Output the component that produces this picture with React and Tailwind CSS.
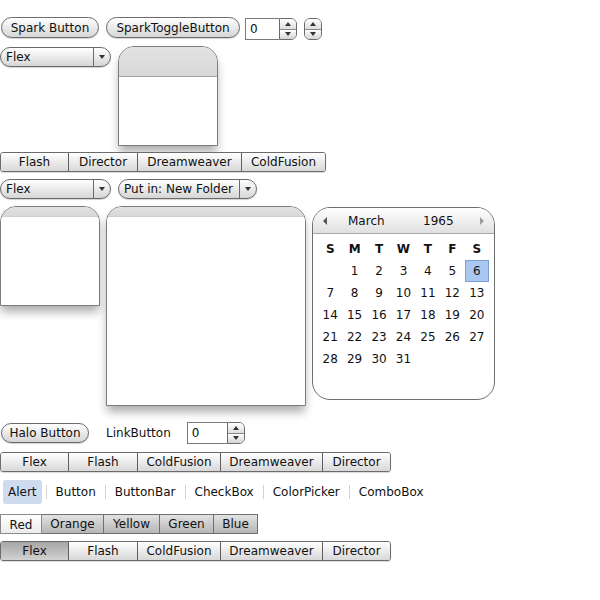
import React from "react";

const pill =
  "rounded-full border border-[#6b6b6b] bg-linear-to-b from-white to-[#d6d6d6] shadow-[0_1px_1px_rgba(0,0,0,0.18)]";

function TriDown() {
  return <div className="w-0 h-0 border-l-[3.5px] border-r-[3.5px] border-t-[4px] border-l-transparent border-r-transparent border-t-[#333]" />;
}
function TriUp() {
  return <div className="w-0 h-0 border-l-[3.5px] border-r-[3.5px] border-b-[4px] border-l-transparent border-r-transparent border-b-[#333]" />;
}

function Spin({ className }) {
  return (
    <div className={`flex flex-col w-[18px] h-[22px] border border-[#6b6b6b] overflow-hidden ${className}`}>
      <div className="flex-1 flex items-center justify-center bg-linear-to-b from-white to-[#dedede]">
        <TriUp />
      </div>
      <div className="flex-1 flex items-center justify-center border-t border-[#8a8a8a] bg-linear-to-b from-white to-[#d4d4d4]">
        <TriDown />
      </div>
    </div>
  );
}

function Stepper({ inputW }) {
  return (
    <div className="flex h-[22px]">
      <div className={`${inputW} h-[22px] border border-r-0 border-[#7a7a7a] bg-white pl-[4px] leading-[20px]`}>0</div>
      <Spin className="rounded-r-[6px]" />
    </div>
  );
}

function DropDown({ label, leftW, className }) {
  return (
    <div className={`flex h-[20px] ${pill} ${className}`}>
      <div className={`${leftW} h-full flex items-center pl-[5px] leading-none`}>{label}</div>
      <div className="w-[17px] h-full border-l border-[#6b6b6b] flex items-center justify-center pr-[1px]">
        <TriDown />
      </div>
    </div>
  );
}

function Panel({ className, header }) {
  return (
    <div
      className={`flex flex-col border border-[#7c7c7c] rounded-t-[16px] overflow-hidden bg-white shadow-[0_7px_10px_-1px_rgba(0,0,0,0.32)] ${className}`}
    >
      <div className={`${header} bg-linear-to-b from-[#e2e2e2] to-[#d8d8d8]`} />
      <div className="flex-1 bg-white" />
    </div>
  );
}

function Bar({ items, selected }) {
  return (
    <div className="flex h-[20px] w-fit border border-[#6b6b6b] rounded-[3px] overflow-hidden shadow-[0_1px_1px_rgba(0,0,0,0.15)]">
      {items.map(([t, w], i) => (
        <div
          key={t}
          className={`${w} h-full flex items-center justify-center leading-none ${i > 0 ? "border-l border-[#5f5f5f]" : ""} ${
            selected === i ? "bg-linear-to-b from-[#a6a6a6] to-[#d2d2d2]" : "bg-linear-to-b from-white to-[#d8d8d8]"
          }`}
        >
          {t}
        </div>
      ))}
    </div>
  );
}

const days = [
  ["", "1", "2", "3", "4", "5", "6"],
  ["7", "8", "9", "10", "11", "12", "13"],
  ["14", "15", "16", "17", "18", "19", "20"],
  ["21", "22", "23", "24", "25", "26", "27"],
  ["28", "29", "30", "31", "", "", ""],
];

function Calendar() {
  return (
    <div className="w-[183px] h-[193px] border border-[#6e6e6e] rounded-[18px] overflow-hidden bg-white">
      <div className="h-[26px] flex items-center border-b border-[#a8a8a8] bg-linear-to-b from-white to-[#e0e0e0]">
        <div className="ml-[10px] w-0 h-0 border-t-[4px] border-b-[4px] border-r-[4px] border-t-transparent border-b-transparent border-r-[#555]" />
        <div className="ml-[21px] w-[36px]">March</div>
        <div className="ml-[39px] w-[24px]">1965</div>
        <div className="ml-[33px] w-0 h-0 border-t-[4px] border-b-[4px] border-l-[4px] border-t-transparent border-b-transparent border-l-[#9c9c9c]" />
      </div>
      <div className="mt-[4px] ml-[5px] w-[171px] grid grid-cols-7">
        {["S", "M", "T", "W", "T", "F", "S"].map((d, i) => (
          <div key={i} className="h-[22px] flex items-center justify-center font-bold">
            {d}
          </div>
        ))}
        {days.flat().map((d, i) => (
          <div
            key={i}
            className={`h-[22px] flex items-center justify-center ${
              d === "6" ? "bg-[#a9c7ef] border border-[#7c9fd6]" : ""
            }`}
          >
            {d}
          </div>
        ))}
      </div>
    </div>
  );
}

export default function App() {
  return (
    <div className="w-[600px] h-[600px] bg-white text-[12px] text-[#111] font-['DejaVu_Sans',sans-serif] pt-[17px] flex flex-col">
      {/* Row 1 */}
      <div className="flex items-start">
        <div className={`ml-[1px] w-[98px] h-[21px] flex items-center justify-center leading-none ${pill}`}>Spark Button</div>
        <div className={`ml-[7px] w-[134px] h-[21px] flex items-center justify-center leading-none ${pill}`}>
          SparkToggleButton
        </div>
        <div className="ml-[5px] mt-[1px]">
          <Stepper inputW="w-[34px]" />
        </div>
        <Spin className="ml-[7px] mt-[1px] rounded-[6px]" />
      </div>

      {/* Row 2 */}
      <div className="flex items-start mt-[6px]">
        <DropDown label="Flex" leftW="w-[92px]" className="mt-[1px]" />
        <Panel className="ml-[7px] w-[100px] h-[100px]" header="h-[30px] border-b border-[#a4a4a4]" />
      </div>

      {/* Row 3 */}
      <div className="mt-[6px]">
        <Bar
          items={[
            ["Flash", "w-[67px]"],
            ["Director", "w-[69px]"],
            ["Dreamweaver", "w-[104px]"],
            ["ColdFusion", "w-[84px]"],
          ]}
        />
      </div>

      {/* Row 4 */}
      <div className="flex items-start mt-[7px]">
        <DropDown label="Flex" leftW="w-[92px]" />
        <DropDown label="Put in: New Folder" leftW="w-[120px]" className="ml-[7px]" />
      </div>

      {/* Row 5 */}
      <div className="flex items-start mt-[7px]">
        <Panel className="w-[100px] h-[100px]" header="h-[10px] border-b border-[#cfcfcf]" />
        <Panel className="ml-[6px] w-[200px] h-[200px]" header="h-[10px] border-b border-[#cfcfcf]" />
        <div className="ml-[6px] mt-[1px]">
          <Calendar />
        </div>
      </div>

      {/* Row 6 */}
      <div className="flex items-center mt-[16px] h-[22px]">
        <div className={`ml-[1px] w-[88px] h-[20px] flex items-center justify-center leading-none ${pill}`}>Halo Button</div>
        <div className="ml-[17px]">LinkButton</div>
        <div className="ml-[16px]">
          <Stepper inputW="w-[40px]" />
        </div>
      </div>

      {/* Row 7 */}
      <div className="mt-[8px]">
        <Bar
          items={[
            ["Flex", "w-[67px]"],
            ["Flash", "w-[69px]"],
            ["ColdFusion", "w-[83px]"],
            ["Dreamweaver", "w-[102px]"],
            ["Director", "w-[68px]"],
          ]}
        />
      </div>

      {/* Row 8 LinkBar */}
      <div className="flex items-center h-[24px] mt-[8px]">
        <div className="ml-[3px] px-[5px] h-full flex items-center bg-[#cfdcef] rounded-[2px]">Alert</div>
        {["Button", "ButtonBar", "CheckBox", "ColorPicker", "ComboBox"].map((t) => (
          <React.Fragment key={t}>
            <div className="mx-[4px] w-px h-[14px] bg-[#d2d2d2]" />
            <div className="px-[5px] h-full flex items-center">{t}</div>
          </React.Fragment>
        ))}
      </div>

      {/* Row 9 TabBar */}
      <div className="flex h-[20px] mt-[10px]">
        <div className="w-[42px] h-full border border-[#8a8a8a] bg-linear-to-b from-white to-[#ececec] flex items-center justify-center pt-[2px] leading-none">
          Red
        </div>
        {[
          ["Orange", "w-[62px]"],
          ["Yellow", "w-[56px]"],
          ["Green", "w-[54px]"],
          ["Blue", "w-[44px]"],
        ].map(([t, w]) => (
          <div
            key={t}
            className={`${w} h-full border-y border-r border-[#6f6f6f] bg-linear-to-b from-[#e2e2e2] to-[#b6b6b6] flex items-center justify-center leading-none`}
          >
            {t}
          </div>
        ))}
      </div>

      {/* Row 10 ToggleButtonBar */}
      <div className="mt-[7px]">
        <Bar
          selected={0}
          items={[
            ["Flex", "w-[67px]"],
            ["Flash", "w-[69px]"],
            ["ColdFusion", "w-[83px]"],
            ["Dreamweaver", "w-[102px]"],
            ["Director", "w-[68px]"],
          ]}
        />
      </div>
    </div>
  );
}
